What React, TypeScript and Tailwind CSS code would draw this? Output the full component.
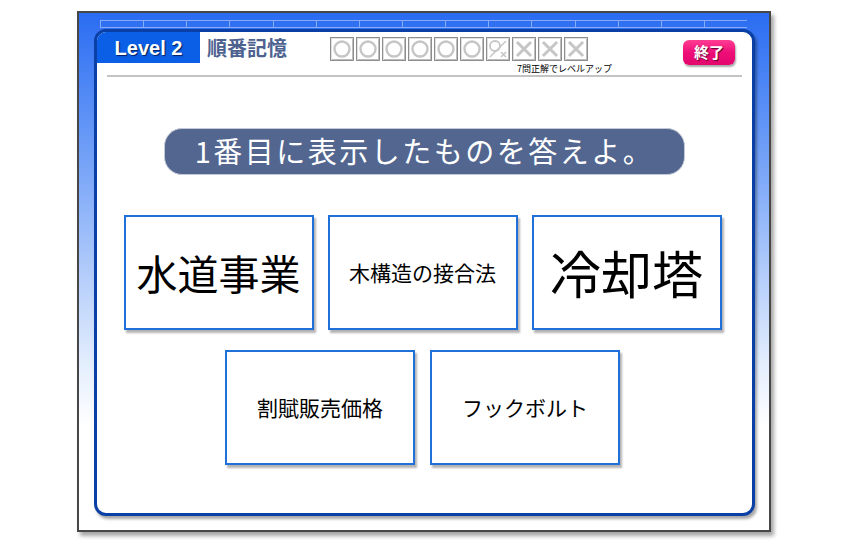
const JP = 'font-["Noto_Sans_CJK_JP","Noto_Sans",sans-serif]'

type Mark = 'o' | 'x' | 'ox'

const marks: Mark[] = ['o', 'o', 'o', 'o', 'o', 'o', 'ox', 'x', 'x', 'x']

function MarkIcon({ mark }: { mark: Mark }) {
  const c = '#c6c6c6'
  return (
    <svg width="22" height="22" viewBox="0 0 22 22">
      {mark === 'o' && <circle cx="11" cy="11" r="7.5" fill="none" stroke={c} strokeWidth="2.4" />}
      {mark === 'x' && (
        <g stroke={c} strokeWidth="3" strokeLinecap="square">
          <line x1="5" y1="5" x2="17" y2="17" />
          <line x1="17" y1="5" x2="5" y2="17" />
        </g>
      )}
      {mark === 'ox' && (
        <g stroke={c} fill="none">
          <circle cx="8" cy="8" r="5" strokeWidth="1.8" />
          <line x1="19" y1="3" x2="3" y2="19" strokeWidth="1.4" />
          <line x1="14" y1="14" x2="19" y2="19" strokeWidth="1.6" />
          <line x1="19" y1="14" x2="14" y2="19" strokeWidth="1.6" />
        </g>
      )}
    </svg>
  )
}

function Card({ text, size }: { text: string; size: string }) {
  return (
    <div
      className={`flex h-[115px] w-[190px] items-center justify-center border-2 border-[#1f70d8] bg-white text-black shadow-[2px_3px_2px_rgba(0,0,0,0.3)] ${size}`}
    >
      {text}
    </div>
  )
}

export default function App() {
  return (
    <div className={`min-h-[544px] w-[848px] bg-white pt-[11px] ${JP}`}>
      <div className="ml-[77px] h-[521px] w-[694px] border-2 border-[#474747] bg-[linear-gradient(to_bottom,#2a6cf2_0%,#5d92f6_20%,#a3c2fa_45%,#e4eefd_68%,#ffffff_80%)] shadow-[3px_4px_4px_rgba(0,0,0,0.35)]">
        {/* ruler strip */}
        <div className="ml-[21px] mt-[7px] mb-[1px] flex h-[8px] w-[647px] border-y border-[#86aaf6]">
          {Array.from({ length: 15 }).map((_, i) => (
            <div key={i} className="flex-1 border-l border-[#86aaf6]" />
          ))}
        </div>

        {/* main panel */}
        <div className="ml-[15px] h-[487px] w-[661px] rounded-[12px] border-[3px] border-[#0a3fa6] bg-white shadow-[2px_3px_3px_rgba(0,0,0,0.35)]">
          <div className="flex h-[31px]">
            <div className="flex w-[103px] items-center justify-center rounded-tl-[9px] bg-[#0a5fe6] pt-[1px] font-['Liberation_Sans',Arial,sans-serif] text-[20px] font-bold text-white [text-shadow:1px_1px_1px_#002060]">
              Level 2
            </div>
            <div className="ml-[7px] flex items-center text-[20px] font-bold text-[#4e6290]">順番記憶</div>
            <div className="ml-[43px] mt-[5px] flex h-[24px] gap-[2px]">
              {marks.map((m, i) => (
                <div
                  key={i}
                  className="flex h-[24px] w-[24px] items-center justify-center border border-[#8e8e8e] bg-white shadow-[inset_1px_1px_0_#e0e0e0,inset_-1px_-1px_0_#bdbdbd]"
                >
                  <MarkIcon mark={m} />
                </div>
              ))}
            </div>
            <div className="flex-1" />
            <div className="mr-[17px] mt-[8px] flex h-[25px] w-[52px] items-center justify-center rounded-[6px] bg-[linear-gradient(to_bottom,#ff3d93,#ee0e78_50%,#e2066d)] text-[15px] font-bold text-white shadow-[1px_2px_2px_rgba(0,0,0,0.35)] [text-shadow:1px_1px_1px_#600030]">
              終了
            </div>
          </div>

          <div className="h-[12px] pl-[420px] text-[9px] leading-[12px] text-black">7問正解でレベルアップ</div>
          <div className="mx-[10px] h-[2px] bg-[#c4c4c4]" />

          <div className="mx-auto mt-[51px] flex h-[47px] w-[521px] items-center justify-center rounded-[18px] border border-[#c3c9d6] bg-[#52668f] pb-[1px] text-[29px] tracking-[2.5px] text-white">
            1番目に表示したものを答えよ。
          </div>

          <div className="mt-[40px] flex flex-col items-center gap-[20px] pr-[4px]">
            <div className="flex gap-[14px]">
              <Card text="水道事業" size="text-[41px]" />
              <Card text="木構造の接合法" size="text-[21px]" />
              <Card text="冷却塔" size="text-[51px]" />
            </div>
            <div className="flex gap-[15px]">
              <Card text="割賦販売価格" size="text-[21px]" />
              <Card text="フックボルト" size="text-[21px]" />
            </div>
          </div>
        </div>
      </div>
    </div>
  )
}
